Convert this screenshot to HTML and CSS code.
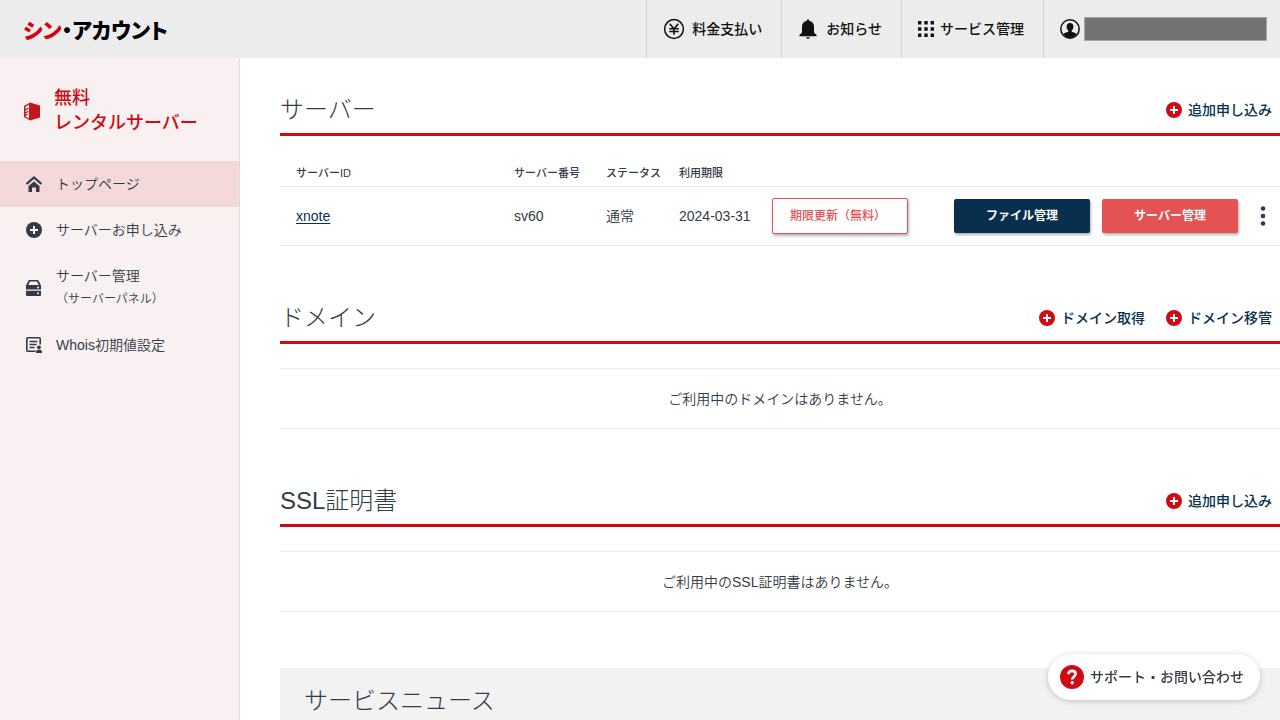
FILE: index.html
```html
<!DOCTYPE html>
<html lang="ja">
<head>
<meta charset="utf-8">
<meta name="viewport" content="width=device-width, initial-scale=1">
<title>シン・アカウント</title>
<link rel="stylesheet" href="styles.css">
</head>
<body>
<svg class="sprite" aria-hidden="true">
  <symbol id="plus" viewBox="0 0 16 16"><circle cx="8" cy="8" r="8" fill="currentColor"/><path d="M8 4v8M4 8h8" stroke="#fff" stroke-width="2"/></symbol>
</svg>
<header class="topbar">
  <a class="logo" href="#"><span class="logo-accent">シン</span><span>・</span><span>アカウント</span></a>
  <nav class="topnav">
    <a class="topnav-item topnav-pay" href="#">
      <svg class="icon-pay" viewBox="0 0 22 22" fill="none" stroke="#111"><circle cx="11" cy="11" r="9.4" stroke-width="1.5"/><path d="M6.8 5.8L11 11l4.200-5.200M11 11v5.800M6.200 10.800h9.600M6.200 13.500h9.600" stroke-width="1.600"/></svg>
      <span>料金支払い</span>
    </a>
    <a class="topnav-item" href="#">
      <svg class="icon-bell" viewBox="0 0 18 20" fill="#111"><path d="M8 1.200a1 1 0 0 1 2 0v.6c3.200.5 5 2.900 5 6v4.700c0 1.200.8 2.200 2.500 3.100v1.600H.5v-1.600c1.700-.9 2.500-1.900 2.500-3.100V7.800c0-3.100 1.800-5.500 5-6z"/><path d="M7.200 18.200h3.600a1.800 1.600 0 0 1-3.600 0z"/></svg>
      <span>お知らせ</span>
    </a>
    <a class="topnav-item topnav-services" href="#">
      <svg class="icon-grid" viewBox="0 0 16 16" fill="#111"><path d="M0 0h3.400v3.400H0zM6.300 0h3.400v3.400H6.300zM12.600 0H16v3.400h-3.400zM0 6.300h3.400v3.400H0zM6.300 6.300h3.400v3.400H6.300zM12.600 6.300H16v3.400h-3.400zM0 12.600h3.400V16H0zM6.300 12.600h3.400V16H6.300zM12.600 12.600H16V16h-3.400z"/></svg>
      <span>サービス管理</span>
    </a>
    <a class="topnav-item topnav-account" href="#" aria-label="アカウント">
      <svg class="icon-user" viewBox="0 0 20 20"><circle cx="10" cy="10" r="9.200" fill="none" stroke="#111" stroke-width="1.500"/><path d="M10 4c2.200 0 3.400 1.500 3.400 3.500 0 1.600-.6 3-1.700 3.900v1.300c2 .7 4.100 1 4.900 2.300A8.700 8.700 0 0 1 10 19a8.700 8.700 0 0 1-6.600-4c.8-1.300 2.900-1.600 4.900-2.300v-1.300C7.200 10.500 6.600 9.100 6.600 7.500 6.600 5.500 7.800 4 10 4z" fill="#111"/></svg>
      <span class="account-mask"></span>
    </a>
  </nav>
</header>
<div class="layout">
  <aside class="sidebar">
    <a class="service" href="#">
      <svg class="icon-service" viewBox="0 0 16 18"><path d="M6 0l10 3v12L6 18 0 14.500V3.500z" fill="#c4161c"/><path d="M5 1.900v14.200L1.500 14V4.200z" fill="#f9f0f1"/><path d="M1 7.500l3.400-1.700M1 10.500l3.400-1.700M1 13l2.500-1.300" stroke="#c4161c" stroke-width="1.300"/></svg>
      <span>無料<br>レンタルサーバー</span>
    </a>
    <nav class="menu">
      <a class="menu-item is-current" href="#">
        <svg class="menu-icon" viewBox="0 0 16 16"><path d="M.5 8L8 1.500 15.500 8" fill="none" stroke="#333b45" stroke-width="2.200"/><path d="M8 5.500l5.500 4.600V16H10v-4.500H6V16H2.500v-5.900z" fill="#333b45"/></svg>
        <span>トップページ</span>
      </a>
      <a class="menu-item" href="#">
        <svg class="menu-icon"><use href="#plus"/></svg>
        <span>サーバーお申し込み</span>
      </a>
      <a class="menu-item" href="#">
        <svg class="menu-icon" viewBox="0 0 16 16" fill="#333b45"><path fill-rule="evenodd" d="M3.500 0h8a1 1 0 0 1 1 .6L15 5.500V9.500H0V5.500L2.500.6a1 1 0 0 1 1-.6zM4 1.500L2.300 5h10.400L11 1.500zM12 6.500a1 1 0 1 0 0 2 1 1 0 0 0 0-2z"/><path fill-rule="evenodd" d="M0 10.800h15V15a1 1 0 0 1-1 1H1a1 1 0 0 1-1-1zM12 12.300a1 1 0 1 0 0 2 1 1 0 0 0 0-2z"/></svg>
        <span>サーバー管理<small class="menu-sub">（サーバーパネル）</small></span>
      </a>
      <a class="menu-item" href="#">
        <svg class="menu-icon" viewBox="0 0 16 16"><path d="M9.500 14.200H1.800a1 1 0 0 1-1-1V1.800a1 1 0 0 1 1-1h11.400a1 1 0 0 1 1 1v5.700" fill="none" stroke="#333b45" stroke-width="1.600"/><path d="M3.500 4.500h8M3.500 7.500h7M3.500 10.500h5" stroke="#333b45" stroke-width="1.300"/><circle cx="13" cy="10.300" r="1.900" fill="#333b45"/><path d="M10 16v-1.300c0-1.400 1.200-2 3-2s3 .6 3 2V16z" fill="#333b45"/></svg>
        <span>Whois初期値設定</span>
      </a>
    </nav>
  </aside>
  <main class="main">
    <section class="section">
      <div class="section-head">
        <h2 class="section-title">サーバー</h2>
        <div class="section-links">
          <a class="add-link" href="#"><svg class="add-icon"><use href="#plus"/></svg>追加申し込み</a>
        </div>
      </div>
      <table class="servers">
        <colgroup><col><col class="col-number"><col class="col-status"><col class="col-limit"><col class="col-renew"><col class="col-actions"></colgroup>
        <thead><tr><th scope="col">サーバーID</th><th scope="col">サーバー番号</th><th scope="col">ステータス</th><th scope="col">利用期限</th><td></td><td></td></tr></thead>
        <tbody><tr>
          <td><a class="server-id" href="#">xnote</a></td><td>sv60</td><td>通常</td><td>2024-03-31</td>
          <td><button class="button button-outline" type="button">期限更新（無料）</button></td>
          <td><div class="actions">
            <button class="button button-navy" type="button">ファイル管理</button>
            <button class="button button-red" type="button">サーバー管理</button>
            <button class="more" type="button" aria-label="メニュー"><svg class="more-icon" viewBox="0 0 6 20" fill="#333b45"><circle cx="3" cy="2.500" r="2.300"/><circle cx="3" cy="10" r="2.300"/><circle cx="3" cy="17.500" r="2.300"/></svg></button>
          </div></td>
        </tr></tbody>
      </table>
    </section>
    <section class="section">
      <div class="section-head">
        <h2 class="section-title">ドメイン</h2>
        <div class="section-links">
          <a class="add-link" href="#"><svg class="add-icon"><use href="#plus"/></svg>ドメイン取得</a>
          <a class="add-link" href="#"><svg class="add-icon"><use href="#plus"/></svg>ドメイン移管</a>
        </div>
      </div>
      <p class="empty">ご利用中のドメインはありません。</p>
    </section>
    <section class="section">
      <div class="section-head">
        <h2 class="section-title">SSL証明書</h2>
        <div class="section-links">
          <a class="add-link" href="#"><svg class="add-icon"><use href="#plus"/></svg>追加申し込み</a>
        </div>
      </div>
      <p class="empty">ご利用中のSSL証明書はありません。</p>
    </section>
    <section class="news"><h2 class="section-title">サービスニュース</h2></section>
  </main>
</div>
<button class="support" type="button">
  <svg class="support-icon" viewBox="0 0 24 24"><circle cx="12" cy="12" r="12" fill="#cf0a12"/><path d="M8.500 9.200C8.500 7 10 5.900 12 5.900s3.600 1.200 3.600 3.100c0 2.600-3.400 2.700-3.400 5.400" fill="none" stroke="#fff" stroke-width="2.600"/><circle cx="12.200" cy="17.700" r="1.700" fill="#fff"/></svg>
  <span>サポート・お問い合わせ</span>
</button>
</body>
</html>
```
FILE: styles.css
```css
* { box-sizing: border-box; }

body {
  margin: 0;
  min-height: 100vh;
  display: flex;
  flex-direction: column;
  background: #fff;
  color: #333b45;
  font: 350 14px/24px "Liberation Sans", "Noto Sans CJK JP", sans-serif;
}

a { color: inherit; text-decoration: none; }
button { font: inherit; cursor: pointer; }
svg { flex: none; display: block; }
h2, p { margin: 0; }

.sprite { position: absolute; width: 0; height: 0; }

/* Top bar */
.topbar {
  display: flex;
  justify-content: space-between;
  height: 58px;
  background: #ececec;
  color: #111;
}
.logo {
  display: flex;
  align-items: center;
  padding-left: 23px;
  font-family: "Noto Sans CJK JP", sans-serif;
  font-size: 21px;
  font-weight: 900;
  font-feature-settings: "palt";
  color: #000;
}
.logo-accent { color: #d7000f; }
.topnav { display: flex; }
.topnav-item {
  display: flex;
  align-items: center;
  gap: 8px;
  padding: 0 19px 0 16px;
  border-left: 1px solid #d3d3d3;
  font-weight: 500;
}
.topnav-pay { gap: 7px; }
.topnav-services { gap: 6px; }
.topnav-account { gap: 4px; padding-right: 13px; }
.icon-pay { width: 22px; height: 22px; }
.icon-bell { width: 20px; height: 20px; }
.icon-grid { width: 16px; height: 16px; }
.icon-user { width: 20px; height: 20px; }
.account-mask {
  width: 183px;
  height: 24px;
  background: #737373;
  border: 1px solid #a5a5a5;
}

/* Layout */
.layout { flex: 1; display: flex; }
.sidebar {
  flex: none;
  width: 240px;
  background: #f9f0f1;
  border-right: 1px solid #e3dadb;
}
.service {
  display: flex;
  align-items: center;
  gap: 14px;
  padding: 28px 24px 25px;
  color: #cf0a12;
  font-size: 18px;
  font-weight: 500;
  line-height: 25px;
}
.icon-service { width: 16px; height: 19px; }
.menu-item {
  display: flex;
  align-items: center;
  gap: 14px;
  padding: 11px 26px;
}
.is-current { background: #f3d9d9; }
.menu-icon { width: 16px; height: 16px; }
.menu-sub { display: block; font-size: 12px; line-height: 23px; }

.main {
  flex: 1;
  min-width: 0;
  display: flex;
  flex-direction: column;
  padding: 34px 0 0 40px;
}

/* Sections */
.section { margin-bottom: 54px; }
.section-head {
  display: flex;
  align-items: center;
  justify-content: space-between;
  padding: 0 8px 5px 0;
  border-bottom: 3px solid #cf0a12;
}
.section-title { font-size: 24px; font-weight: 300; line-height: 36px; }
.section-links { display: flex; gap: 21px; }
.add-link {
  display: flex;
  align-items: center;
  gap: 6px;
  color: #08304e;
  font-weight: 500;
}
.add-icon { width: 16px; height: 16px; color: #cf0a12; }

.servers {
  width: 100%;
  margin-top: 24px;
  border-collapse: separate;
  border-spacing: 0;
  table-layout: fixed;
}
.servers th, .servers td {
  padding: 0 0 0 16px;
  border-bottom: 1px solid #ebebeb;
  text-align: left;
  white-space: nowrap;
}
.servers thead tr { height: 27px; }
.servers tbody tr { height: 59px; }
.servers th { font-size: 11px; font-weight: 500; }
.col-number { width: 92px; }
.col-status { width: 73px; }
.col-limit { width: 93px; }
.col-renew { width: 182px; }
.col-actions { width: 342px; }
.server-id { color: #08304e; text-decoration: underline; text-underline-offset: 2px; }

.actions { display: flex; align-items: center; gap: 12px; }
.button {
  width: 136px;
  height: 34px;
  padding: 0;
  border: 0;
  border-radius: 2px;
  box-shadow: 1px 2px 3px rgba(0, 0, 0, .3);
  color: #fff;
  font-size: 12px;
  font-weight: 700;
}
.button-outline {
  height: 36px;
  padding-right: 4px;
  border: 1px solid #e55353;
  background: #fff;
  color: #e55353;
  font-weight: 500;
}
.button-navy { background: #08304e; }
.button-red { background: #e35353; }
.more { padding: 0 10px; border: 0; background: none; }
.more-icon { width: 6px; height: 20px; }

.empty {
  margin-top: 24px;
  padding: 18px 0 17px;
  border: solid #ebebeb;
  border-width: 1px 0;
  text-align: center;
}

.news { flex: 1; padding: 15px 24px 0; margin-top: 2px; background: #f2f2f2; }

/* Floating support button */
.support {
  position: fixed;
  right: 20px;
  bottom: 20px;
  display: flex;
  align-items: center;
  gap: 6px;
  height: 46px;
  padding: 0 16px 0 12px;
  border: 0;
  border-radius: 23px;
  background: #fff;
  box-shadow: 0 1px 6px rgba(0, 0, 0, .2);
  color: #333b45;
  font-weight: 500;
}
.support-icon { width: 24px; height: 24px; }
```
